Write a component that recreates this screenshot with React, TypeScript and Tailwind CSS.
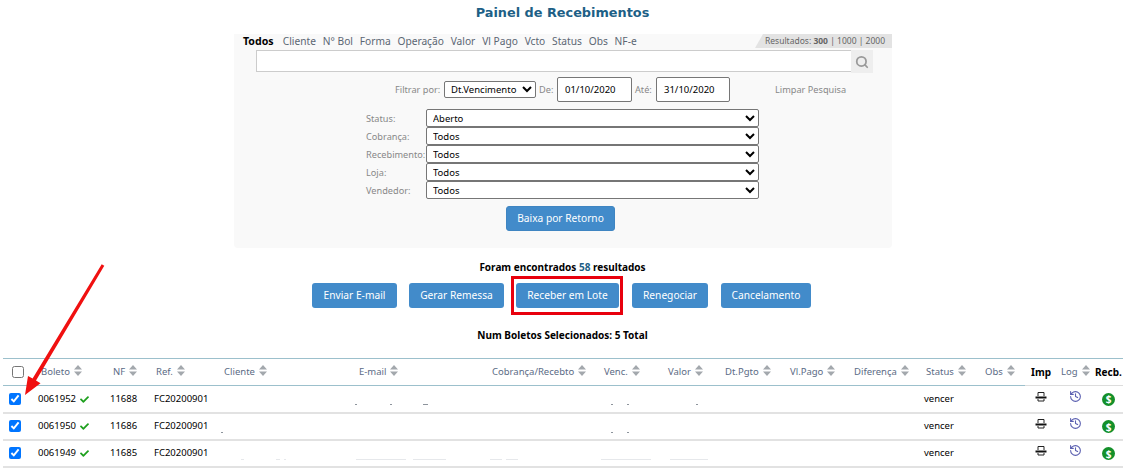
import { History, Search } from 'lucide-react'
import { FaCheck } from 'react-icons/fa'

const tabs = ['Cliente', 'N° Bol', 'Forma', 'Operação', 'Valor', 'Vl Pago', 'Vcto', 'Status', 'Obs', 'NF-e']

const filters = [
  { label: 'Status:', value: 'Aberto' },
  { label: 'Cobrança:', value: 'Todos' },
  { label: 'Recebimento:', value: 'Todos' },
  { label: 'Loja:', value: 'Todos' },
  { label: 'Vendedor:', value: 'Todos' },
]

const columns = [
  { title: 'Boleto', width: 'w-[72px]', pad: 'pl-[6px]' },
  { title: 'NF', width: 'w-[44px]', pad: 'pl-[6px]' },
  { title: 'Ref.', width: 'w-[67px]', pad: 'pl-[5px]' },
  { title: 'Cliente', width: 'w-[135px]', pad: 'pl-[6px]' },
  { title: 'E-mail', width: 'w-[133px]', pad: 'pl-[6px]' },
  { title: 'Cobrança/Recebto', width: 'w-[112px]', pad: 'pl-[6px]' },
  { title: 'Venc.', width: 'w-[64px]', pad: 'pl-[6px]' },
  { title: 'Valor', width: 'w-[57px]', pad: 'pl-[6px]' },
  { title: 'Dt.Pgto', width: 'w-[65px]', pad: 'pl-[6px]' },
  { title: 'Vl.Pago', width: 'w-[64px]', pad: 'pl-[6px]' },
  { title: 'Diferença', width: 'w-[72px]', pad: 'pl-[6px]' },
  { title: 'Status', width: 'w-[59px]', pad: 'pl-[6px]' },
  { title: 'Obs', width: 'w-[46px]', pad: 'pl-[6px]' },
]

// pedacos borrados dos dados ocultos: [inicio, largura] por coluna
type Specks = number[][][]

const rows: { boleto: string; nf: string; specks: Specks; tone: string }[] = [
  {
    boleto: '0061952',
    nf: '11688',
    tone: 'bg-[#8d949c]',
    specks: [[], [[2, 2], [37, 2], [70, 5]], [], [[13, 2], [29, 2]], [[34, 2]], [], [], []],
  },
  {
    boleto: '0061950',
    nf: '11686',
    tone: 'bg-[#8d949c]',
    specks: [[[3, 2]], [], [], [[13, 2], [29, 2]], [], [], [], []],
  },
  {
    boleto: '0061949',
    nf: '11685',
    tone: 'bg-[#e6e8eb]',
    specks: [[[23, 3], [58, 4], [66, 2]], [[3, 50], [60, 33]], [[4, 12], [20, 12]], [[3, 50]], [[8, 38]], [], [], []],
  },
]

function SortIcon() {
  return (
    <svg viewBox="0 0 8 11" className="inline-block w-[8px] h-[11px] ml-[4px] align-[-1px] text-[#a3a8ad]" fill="currentColor">
      <path d="M4 0 8 4.500H0zM4 11 0 6.500h8z" />
    </svg>
  )
}

function PrintIcon() {
  return (
    <svg viewBox="0 0 12 11" className="w-[12px] h-[11px]" fill="none" stroke="#222">
      <path d="M3 5V1.500h6V5M3 8v2h6V8" />
      <path d="M0.500 6.500h11" strokeWidth="2" stroke="#111" />
    </svg>
  )
}

function MoneyIcon() {
  return (
    <span className="inline-flex items-center justify-center w-[13px] h-[13px] rounded-full bg-[#14902a] text-white text-[10px] font-bold leading-none">
      $
    </span>
  )
}

function FilterSelect({ value, className }: { value: string; className: string }) {
  return (
    <select defaultValue={value} className={`bg-white border border-[#767676] rounded-[2px] text-[9.5px] text-black pl-[2px] ${className}`}>
      <option>{value}</option>
    </select>
  )
}

function SpeckCell({ specks, tone }: { specks: number[][]; tone: string }) {
  return (
    <td className="align-top">
      <div className="relative h-[1px] mt-[18px]">
        {specks.map(([start, width]) => (
          <span key={start} className={`absolute top-0 h-[1px] ${tone}`} style={{ left: start, width }} />
        ))}
      </div>
    </td>
  )
}

export default function App() {
  return (
    <div className="relative h-[469px] overflow-hidden bg-white font-['Noto_Sans',sans-serif] text-[9.5px] text-black">
      <h1 className="h-[34px] pt-[3px] pr-[2px] text-center font-['DejaVu_Sans',sans-serif] text-[12.85px] leading-[20px] font-bold text-[#1d5f86]">
        Painel de Recebimentos
      </h1>

      <div className="w-[658px] h-[214px] ml-[234px] bg-[#f9f9f9] rounded-b-[4px]">
        <div className="flex justify-between h-[14px] leading-[14px]">
          <div className="flex gap-[6.8px] pl-[9px] text-[10.2px] text-[#5b6673]">
            <span className="w-[33px] font-bold text-[10.6px] text-black">Todos</span>
            {tabs.map((tab) => (
              <span key={tab}>{tab}</span>
            ))}
          </div>
          <div className="w-[137px] pl-[10px] bg-[#e3e3e3] text-[8.5px] text-[#666] whitespace-nowrap [clip-path:polygon(8px_0,100%_0,100%_100%,0_100%)]">
            Resultados: <b>300</b> | 1000 | 2000
          </div>
        </div>

        <div className="flex mt-[2px] ml-[22px]">
          <div className="w-[595px] h-[22px] bg-white border border-[#ccc] border-r-0" />
          <div className="flex items-center justify-center w-[22px] h-[23px] bg-[#eeeeee]">
            <Search className="w-[14px] h-[14px] text-[#999]" strokeWidth={3} />
          </div>
        </div>

        <div className="flex items-center h-[25px] mt-[4px] ml-[161px] text-[9.2px] text-[#888]">
          <span className="w-[49px] whitespace-nowrap">Filtrar por:</span>
          <FilterSelect value="Dt.Vencimento" className="w-[92px] h-[17px]" />
          <span className="w-[21px] pl-[3px]">De:</span>
          <input defaultValue="01/10/2020" className="w-[75px] h-[25px] pl-[7px] bg-white border border-[#767676] rounded-[2px] text-[9.5px] text-black" />
          <span className="w-[24px] pl-[3px]">Até:</span>
          <input defaultValue="31/10/2020" className="w-[74px] h-[25px] pl-[7px] bg-white border border-[#767676] rounded-[2px] text-[9.5px] text-black" />
          <span className="ml-[45px]">Limpar Pesquisa</span>
        </div>

        <div className="mt-[7px] ml-[132px]">
          {filters.map((f) => (
            <div key={f.label} className="flex items-center h-[18px] text-[9.2px] text-[#888]">
              <span className="w-[60px] pt-[1px]">{f.label}</span>
              <FilterSelect value={f.value} className="w-[333px] h-[18px]" />
            </div>
          ))}
        </div>

        <div className="flex justify-center mt-[7px] pr-[5px]">
          <button className="w-[109px] h-[25px] bg-[#428bca] border border-[#3f85c2] rounded-[3px] text-[10.2px] text-white">
            Baixa por Retorno
          </button>
        </div>
      </div>

      <p className="mt-[12px] pr-[2px] text-center text-[10px] font-bold leading-[14px]">
        Foram encontrados <span className="text-[#1d5f86]">58</span> resultados
      </p>

      <div className="flex justify-center mt-[9px] pr-[4px] text-[10.2px] text-white">
        <button className="w-[85px] h-[25px] bg-[#428bca] rounded-[3px]">Enviar E-mail</button>
        <button className="w-[95px] h-[25px] ml-[12px] bg-[#428bca] rounded-[3px]">Gerar Remessa</button>
        <div className="relative ml-[12px]">
          <button className="block w-[103px] h-[25px] bg-[#428bca] rounded-[3px]">Receber em Lote</button>
          <span className="absolute -left-[5px] -right-[4px] -top-[7px] -bottom-[7px] border-[3px] border-[#e8000d]" />
        </div>
        <button className="w-[76px] h-[25px] ml-[13px] bg-[#428bca] rounded-[3px]">Renegociar</button>
        <button className="w-[90px] h-[25px] ml-[13px] bg-[#428bca] rounded-[3px]">Cancelamento</button>
      </div>

      <p className="mt-[20px] pr-[2px] text-center text-[10px] font-bold leading-[14px]">Num Boletos Selecionados: 5 Total</p>

      <table className="table-fixed w-[1120px] mt-[16px] ml-[3px] border-collapse">
        <thead>
          <tr className="h-[27px] border-t border-[#9cc0cc] text-[#5b6b85]">
            <th className="w-[32px] border-b border-[#9cc0cc] pl-[9px] text-left font-normal">
              <input type="checkbox" className="block w-[12px] h-[12px]" />
            </th>
            {columns.map((c) => (
              <th key={c.title} className={`${c.width} ${c.pad} pt-[1px] border-b border-[#9cc0cc] text-left font-normal whitespace-nowrap`}>
                {c.title}
                <SortIcon />
              </th>
            ))}
            <th className="w-[31px] pt-[1px] border-b border-[#ddd] pl-[6px] text-left text-[10px] font-bold text-black">Imp</th>
            <th className="w-[34px] pt-[1px] border-b border-[#ddd] pl-[5px] text-left font-normal whitespace-nowrap">
              Log
              <SortIcon />
            </th>
            <th className="w-[33px] pt-[1px] border-b border-[#ddd] pl-[5px] text-left text-[10px] font-bold text-black">Recb.</th>
          </tr>
        </thead>
        <tbody>
          {rows.map((r) => (
            <tr key={r.boleto} className="h-[27px] border-b-2 border-[#e2e2e2]">
              <td className="pl-[6px]">
                <input type="checkbox" defaultChecked className="block w-[12px] h-[12px] accent-[#0075ff]" />
              </td>
              <td className="pl-[3px] pt-[1px]">
                {r.boleto}
                <FaCheck className="inline-block w-[9px] h-[9px] ml-[4px] text-[#1ea01e]" />
              </td>
              <td className="pl-[3px] pt-[1px]">{r.nf}</td>
              <td className="pl-[3px] pt-[1px]">FC20200901</td>
              {r.specks.map((s, i) => (
                <SpeckCell key={i} specks={s} tone={r.tone} />
              ))}
              <td className="pl-[4px] pt-[1px]">vencer</td>
              <td />
              <td className="pl-[10px] pb-[5px]">
                <PrintIcon />
              </td>
              <td className="pl-[13px] pb-[5px]">
                <History className="w-[13px] h-[13px] text-[#5a5fb0]" />
              </td>
              <td className="pl-[12px] pt-[3px]">
                <MoneyIcon />
              </td>
            </tr>
          ))}
        </tbody>
      </table>

      <svg viewBox="0 0 110 140" className="absolute left-0 top-[262px] w-[110px] h-[140px]" fill="#f01010">
        <path d="M101.700 2.200 104.300 3.800 36 118.600 40.500 121.300 25 133 28 113.900 32.600 116.600z" />
      </svg>
    </div>
  )
}
